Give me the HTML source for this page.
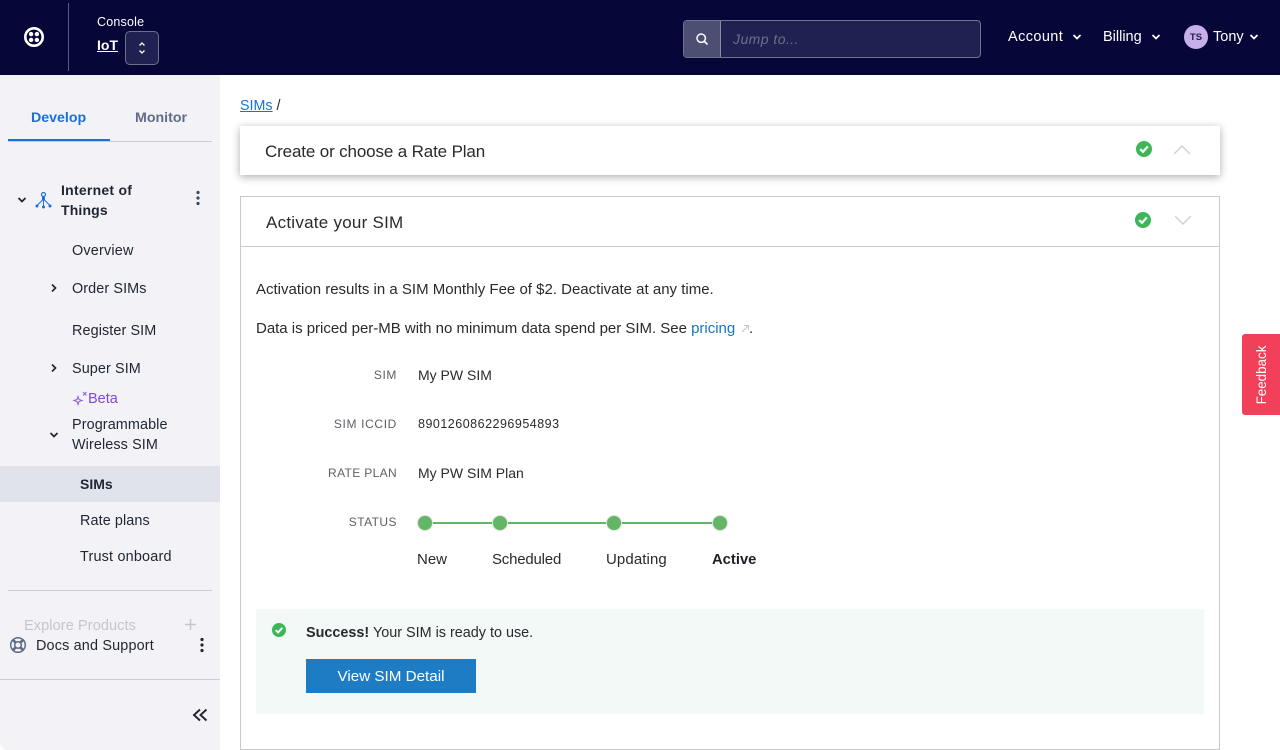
<!DOCTYPE html>
<html><head><meta charset="utf-8"><title>SIMs</title>
<style>
html,body{margin:0;padding:0;width:1280px;height:750px;overflow:hidden;background:#fff;font-family:"Liberation Sans",sans-serif;color:#1f2430}
.t{position:absolute;white-space:nowrap;line-height:20px;font-size:14px}
.b{position:absolute}
svg{position:absolute;overflow:visible}
.side{color:#1f2533;font-size:14.4px;letter-spacing:.1px}
.main{color:#282a2e;font-size:15px}
.lab{color:#5e6066;font-size:12px;letter-spacing:.35px;text-align:right;right:883px}
</style></head><body>
<!-- header -->
<div class="b" style="left:0;top:0;width:1280px;height:75px;background:#060639"></div>
<svg style="left:24px;top:27px" width="20" height="20" viewBox="0 0 20 20"><circle cx="10" cy="10" r="8.700" fill="none" stroke="#fff" stroke-width="2.600"/><circle cx="7.100" cy="7.100" r="2.200" fill="#fff"/><circle cx="12.900" cy="7.100" r="2.200" fill="#fff"/><circle cx="7.100" cy="12.900" r="2.200" fill="#fff"/><circle cx="12.900" cy="12.900" r="2.200" fill="#fff"/></svg>
<div class="b" style="left:68px;top:3px;width:1px;height:68px;background:#5b5c7c"></div>
<div class="t" style="left:97px;top:12px;color:#fff;font-size:12.500px;letter-spacing:.2px">Console</div>
<div class="t" style="left:97px;top:35px;color:#fff;font-size:14px;font-weight:bold;text-decoration:underline">IoT</div>
<div class="b" style="left:125px;top:31px;width:32px;height:32px;background:#1f2150;border:1px solid #6e7089;border-radius:5px"></div>
<svg style="left:136px;top:41px" width="12" height="14" viewBox="0 0 12 14"><path d="M3.500 4.500L6 2l2.500 2.500M3.500 9.500L6 12l2.500-2.500" fill="none" stroke="#fff" stroke-width="1.300"/></svg>
<div class="b" style="left:683px;top:20px;width:298px;height:38px;box-sizing:border-box;background:#1f2150;border:1px solid #70718b;border-radius:4px"></div>
<div class="b" style="left:684px;top:21px;width:36px;height:36px;background:#4c4e72;border-right:1px solid #8b8ca3;border-radius:3px 0 0 3px"></div>
<svg style="left:695px;top:32px" width="14" height="14" viewBox="0 0 14 14"><circle cx="6.200" cy="6.200" r="4.200" fill="none" stroke="#fff" stroke-width="1.500"/><path d="M9.200 9.200L12.500 12.500" stroke="#fff" stroke-width="1.700"/></svg>
<div class="t" style="left:733px;top:29px;color:#6d6f8c;font-size:14px;font-style:italic;letter-spacing:.45px">Jump to...</div>
<div class="t" style="left:1008px;top:27px;color:#fff;font-size:14.500px;letter-spacing:.4px">Account</div>
<svg style="left:1071px;top:33px" width="12" height="8" viewBox="0 0 12 8"><path d="M2.500 2L6 5.500 9.500 2" fill="none" stroke="#fff" stroke-width="1.700"/></svg>
<div class="t" style="left:1103px;top:27px;color:#fff;font-size:14.500px">Billing</div>
<svg style="left:1150px;top:33px" width="12" height="8" viewBox="0 0 12 8"><path d="M2.500 2L6 5.500 9.500 2" fill="none" stroke="#fff" stroke-width="1.700"/></svg>
<div class="b" style="left:1184px;top:25px;width:24px;height:24px;border-radius:50%;background:#c8afec;color:#1f2040;font-size:9.500px;font-weight:bold;line-height:25px;text-align:center">TS</div>
<div class="t" style="left:1213px;top:27px;color:#fff;font-size:14.500px">Tony</div>
<svg style="left:1248px;top:33px" width="12" height="8" viewBox="0 0 12 8"><path d="M2.500 2L6 5.500 9.500 2" fill="none" stroke="#fff" stroke-width="1.700"/></svg>
<!-- sidebar -->
<div class="b" style="left:0;top:75px;width:220px;height:675px;background:#f3f3f7;border-radius:0 0 0 8px"></div>
<div class="t" style="left:31px;top:108px;color:#1b6fdc;font-weight:bold;font-size:14.200px">Develop</div>
<div class="t" style="left:135px;top:108px;color:#606b85;font-weight:bold;font-size:14.200px">Monitor</div>
<div class="b" style="left:8px;top:141px;width:204px;height:1px;background:#cacdd8"></div>
<div class="b" style="left:8px;top:139px;width:102px;height:2px;background:#1b6fdc"></div>
<svg style="left:16px;top:195px" width="12" height="10" viewBox="0 0 12 10"><path d="M2.500 3L6 6.500 9.500 3" fill="none" stroke="#1f2533" stroke-width="1.800"/></svg>
<svg style="left:35px;top:191px" width="18" height="18" viewBox="0 0 18 18"><circle cx="8.500" cy="3.500" r="2" fill="none" stroke="#1b6fdc" stroke-width="1.200"/><path d="M8.500 6v10M7.500 6v3L2.500 14M9.500 6v3L14.500 14" fill="none" stroke="#1b6fdc" stroke-width="1"/><circle cx="2" cy="15" r="1.500" fill="#1b6fdc"/><circle cx="8.500" cy="16" r="1.500" fill="#1b6fdc"/><circle cx="15" cy="15" r="1.500" fill="#1b6fdc"/></svg>
<div class="t side" style="left:61px;top:180px;font-weight:bold;font-size:14px;letter-spacing:.25px">Internet of</div>
<div class="t side" style="left:61px;top:200px;font-weight:bold;font-size:14px;letter-spacing:.15px">Things</div>
<svg style="left:194px;top:190px" width="8" height="16" viewBox="0 0 8 16"><circle cx="4" cy="2.500" r="1.600" fill="#394762"/><circle cx="4" cy="8" r="1.600" fill="#394762"/><circle cx="4" cy="13.500" r="1.600" fill="#394762"/></svg>
<div class="t side" style="left:72px;top:241px;letter-spacing:.2px">Overview</div>
<svg style="left:49px;top:283px" width="10" height="10" viewBox="0 0 10 10"><path d="M3 1.500L6.500 5 3 8.500" fill="none" stroke="#1f2533" stroke-width="1.700"/></svg>
<div class="t side" style="left:72px;top:279px">Order SIMs</div>
<div class="t side" style="left:72px;top:321px">Register SIM</div>
<svg style="left:49px;top:363px" width="10" height="10" viewBox="0 0 10 10"><path d="M3 1.500L6.500 5 3 8.500" fill="none" stroke="#1f2533" stroke-width="1.700"/></svg>
<div class="t side" style="left:72px;top:359px">Super SIM</div>
<svg style="left:73px;top:391px" width="15" height="14" viewBox="0 0 15 14"><path d="M5 5.500L6 8.500 9 9.500 6 10.500 5 13.500 4 10.500 1 9.500 4 8.500Z" fill="none" stroke="#8c5bd8"/><path d="M10 1l3.500 3.500M13.500 1L10 4.500" stroke="#8c5bd8"/></svg>
<div class="t" style="left:88px;top:389px;color:#7d4bd6;font-size:14.500px">Beta</div>
<svg style="left:48px;top:430px" width="12" height="10" viewBox="0 0 12 10"><path d="M2.500 3L6 6.500 9.500 3" fill="none" stroke="#1f2533" stroke-width="1.700"/></svg>
<div class="t side" style="left:72px;top:415px">Programmable</div>
<div class="t side" style="left:72px;top:435px">Wireless SIM</div>
<div class="b" style="left:0;top:466px;width:220px;height:36px;background:#e1e3ea"></div>
<div class="t side" style="left:80px;top:474px;font-weight:bold;font-size:14px;letter-spacing:0">SIMs</div>
<div class="t side" style="left:80px;top:511px">Rate plans</div>
<div class="t side" style="left:80px;top:547px;letter-spacing:.2px">Trust onboard</div>
<div class="b" style="left:8px;top:590px;width:204px;height:1px;background:#cacdd8"></div>
<div class="t" style="left:24px;top:616px;color:#c4c6ce;font-size:14.500px;letter-spacing:.1px">Explore Products</div>
<svg style="left:184px;top:618px" width="13" height="13" viewBox="0 0 13 13"><path d="M6.500 1v11M1 6.500h11" stroke="#c4c6ce" stroke-width="1.500"/></svg>
<svg style="left:9px;top:636px" width="18" height="18" viewBox="0 0 18 18"><circle cx="9" cy="9" r="7.300" fill="none" stroke="#606b85" stroke-width="1.500"/><circle cx="9" cy="9" r="3.300" fill="none" stroke="#606b85" stroke-width="1.500"/><path d="M3.800 3.800L6.600 6.600M14.200 3.800L11.400 6.600M3.800 14.200L6.600 11.400M14.200 14.200L11.400 11.400" stroke="#606b85" stroke-width="2.600"/></svg>
<div class="t side" style="left:36px;top:636px;letter-spacing:.17px">Docs and Support</div>
<svg style="left:198px;top:637px" width="8" height="16" viewBox="0 0 8 16"><circle cx="4" cy="2.500" r="1.600" fill="#1f2533"/><circle cx="4" cy="8" r="1.600" fill="#1f2533"/><circle cx="4" cy="13.500" r="1.600" fill="#1f2533"/></svg>
<div class="b" style="left:0;top:679px;width:220px;height:1px;background:#cacdd8"></div>
<svg style="left:192px;top:708px" width="16" height="14" viewBox="0 0 16 14"><path d="M8 1.500L2 7l6 5.500M14.500 1.500L8.500 7l6 5.500" fill="none" stroke="#1f2533" stroke-width="1.900"/></svg>
<!-- main -->
<div class="t" style="left:240px;top:96px;font-size:14.300px;color:#1f2430"><span style="color:#1b6fdc;text-decoration:underline">SIMs</span> /</div>
<div class="b" style="left:240px;top:126px;width:980px;height:49px;background:#fff;box-shadow:0 2px 8px rgba(0,0,0,.32)"></div>
<div class="t" style="left:265px;top:142px;font-size:17px;letter-spacing:-.14px;color:#282a2e">Create or choose a Rate Plan</div>
<svg style="left:1136px;top:141px" width="16" height="16" viewBox="0 0 16 16"><circle cx="8" cy="8" r="8" fill="#3db657"/><path d="M4.200 8.200L7 10.800 11.800 5.400" fill="none" stroke="#fff" stroke-width="2.200"/></svg>
<svg style="left:1173px;top:144px" width="18" height="12" viewBox="0 0 18 12"><path d="M1 10L9 2l8 8" fill="none" stroke="#cfcfcf" stroke-width="1.400"/></svg>
<div class="b" style="left:240px;top:196px;width:980px;height:554px;box-sizing:border-box;border:1px solid #c9c9c9"></div>
<div class="b" style="left:241px;top:246px;width:978px;height:1px;background:#c9c9c9"></div>
<div class="t" style="left:266px;top:213px;font-size:17px;letter-spacing:.25px;color:#282a2e">Activate your SIM</div>
<svg style="left:1135px;top:212px" width="16" height="16" viewBox="0 0 16 16"><circle cx="8" cy="8" r="8" fill="#3db657"/><path d="M4.200 8.200L7 10.800 11.800 5.400" fill="none" stroke="#fff" stroke-width="2.200"/></svg>
<svg style="left:1174px;top:214px" width="18" height="12" viewBox="0 0 18 12"><path d="M1 2l8 8 8-8" fill="none" stroke="#cfcfcf" stroke-width="1.400"/></svg>
<div class="t main" style="left:256px;top:280px">Activation results in a SIM Monthly Fee of $2. Deactivate at any time.</div>
<div class="t main" style="left:256px;top:319px;letter-spacing:-.015px">Data is priced per-MB with no minimum data spend per SIM. See <span style="color:#1a73c4">pricing</span></div>
<svg style="left:741px;top:324px" width="9" height="9" viewBox="0 0 9 9"><path d="M1 8L7.500 1.500M3 1.500h4.500V6" fill="none" stroke="#c6c6c6" stroke-width="1.100"/></svg>
<div class="t main" style="left:749px;top:319px">.</div>
<div class="t lab" style="top:365px;letter-spacing:.6px">SIM</div>
<div class="t main" style="left:418px;top:365px;font-size:14px">My PW SIM</div>
<div class="t lab" style="top:414px;letter-spacing:.65px">SIM ICCID</div>
<div class="t main" style="left:418px;top:414px;font-size:12.500px;letter-spacing:.5px">8901260862296954893</div>
<div class="t lab" style="top:463px">RATE PLAN</div>
<div class="t main" style="left:418px;top:463px;font-size:14px">My PW SIM Plan</div>
<div class="t lab" style="top:512px;letter-spacing:.45px">STATUS</div>
<div class="b" style="left:425px;top:522px;width:295px;height:2px;background:#62b665"></div>
<div class="b" style="left:417px;top:515px;width:14px;height:14px;border:1px solid #dde3dd;border-radius:50%;background:#62b665"></div>
<div class="b" style="left:492px;top:515px;width:14px;height:14px;border:1px solid #dde3dd;border-radius:50%;background:#62b665"></div>
<div class="b" style="left:606px;top:515px;width:14px;height:14px;border:1px solid #dde3dd;border-radius:50%;background:#62b665"></div>
<div class="b" style="left:712px;top:515px;width:14px;height:14px;border:1px solid #dde3dd;border-radius:50%;background:#62b665"></div>
<div class="t main" style="left:417px;top:550px">New</div>
<div class="t main" style="left:492px;top:550px;letter-spacing:-.2px">Scheduled</div>
<div class="t main" style="left:606px;top:550px;letter-spacing:.1px">Updating</div>
<div class="t main" style="left:712px;top:550px;font-weight:bold;color:#1f2126;font-size:14.800px">Active</div>
<div class="b" style="left:256px;top:609px;width:948px;height:105px;background:#f3f9f6"></div>
<svg style="left:272px;top:623px" width="14" height="14" viewBox="0 0 16 16"><circle cx="8" cy="8" r="8" fill="#3db657"/><path d="M4.200 8.200L7 10.800 11.800 5.400" fill="none" stroke="#fff" stroke-width="2.200"/></svg>
<div class="t main" style="left:306px;top:623px;font-size:14.400px"><b>Success!</b> Your SIM is ready to use.</div>
<div class="b" style="left:306px;top:659px;width:170px;height:34px;background:#1d7cc3;color:#fff;font-size:15.200px;line-height:36px;text-align:center">View SIM Detail</div>
<!-- feedback -->
<div class="b" style="left:1242px;top:334px;width:38px;height:81px;background:#f2405a;border-radius:3px 0 0 3px"></div>
<div class="t" style="left:1262px;top:375px;color:#fff;font-size:13.400px;transform:translate(-50%,-50%) rotate(-90deg)">Feedback</div>
</body></html>
